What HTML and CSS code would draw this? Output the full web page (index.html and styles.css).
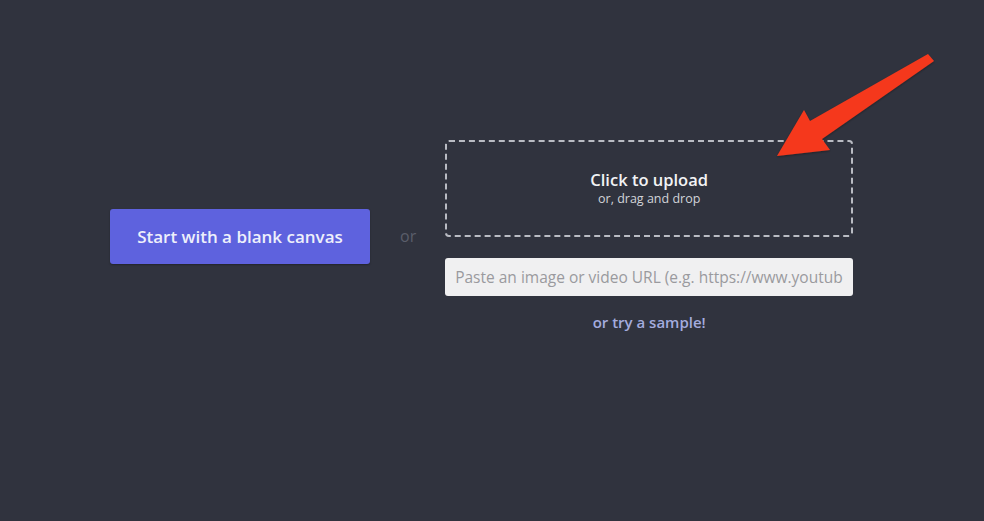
FILE: index.html
```html
<!DOCTYPE html>
<html>
<head>
<meta charset="utf-8">
<link rel="stylesheet" href="styles.css">
</head>
<body>
<div class="page">
  <div class="row">
    <button class="blank">Start with a blank canvas</button>
    <span class="or">or</span>
    <div class="right">
      <div class="drop">
        <div class="drop-title">Click to upload</div>
        <div class="drop-sub">or, drag and drop</div>
      </div>
      <input class="url" type="text" placeholder="Paste an image or video URL (e.g. https://www.youtube.com/watch?v=...)">
      <a class="sample">or try a sample!</a>
    </div>
  </div>
  <svg class="arrow" width="984" height="521" viewBox="0 0 984 521">
    <defs>
      <filter id="sh" x="-20%" y="-20%" width="140%" height="140%">
        <feDropShadow dx="0" dy="1" stdDeviation="1" flood-color="#000" flood-opacity="0.35"/>
      </filter>
    </defs>
    <polygon filter="url(#sh)" fill="#f5391c" points="928,54 934,61 822,139 830,150 777,156 804,110 810,121"/>
  </svg>
</div>
</body>
</html>
```
FILE: styles.css
```css
html, body {
  margin: 0;
  padding: 0;
  background: #30333e;
}
body {
  font-family: "Open Sans", Lato, "Liberation Sans", sans-serif;
  width: 984px;
  height: 521px;
  overflow: hidden;
}
.page {
  position: relative;
  width: 984px;
  height: 521px;
}
.row {
  display: flex;
  align-items: center;
  padding: 140px 0 0 110px;
}
.blank {
  width: 260px;
  height: 55px;
  border: none;
  border-radius: 3px;
  background: #5e62de;
  color: #eef0fb;
  font-family: inherit;
  font-size: 17px;
  font-weight: 600;
  padding: 0;
  box-shadow: 0 1px 2px rgba(0,0,0,0.3);
}
.or {
  color: #5a5e6a;
  font-size: 16px;
  margin: 0 29px 0 30px;
}
.right {
  width: 408px;
  display: flex;
  flex-direction: column;
  align-items: center;
}
.drop {
  box-sizing: border-box;
  width: 408px;
  height: 97px;
  border: 2px dashed #b9bcc3;
  border-radius: 4px;
  display: flex;
  flex-direction: column;
  align-items: center;
  justify-content: center;
}
.drop-title {
  color: #f2f3f5;
  font-size: 16.5px;
  font-weight: 600;
  line-height: 20px;
}
.drop-sub {
  color: #d2d4d9;
  font-size: 12.5px;
  line-height: 17px;
}
.url {
  box-sizing: border-box;
  width: 408px;
  height: 38px;
  margin-top: 21px;
  border: none;
  border-radius: 3px;
  background: #f0f0f1;
  padding: 0 10px;
  font-family: inherit;
  font-size: 15.5px;
  color: #333;
  outline: none;
}
.url::placeholder {
  color: #9a9a9e;
}
.sample {
  margin-top: 16px;
  color: #a4acde;
  font-size: 15px;
  font-weight: 600;
  line-height: 20px;
}
.arrow {
  position: absolute;
  left: 0;
  top: 0;
  pointer-events: none;
}
```
